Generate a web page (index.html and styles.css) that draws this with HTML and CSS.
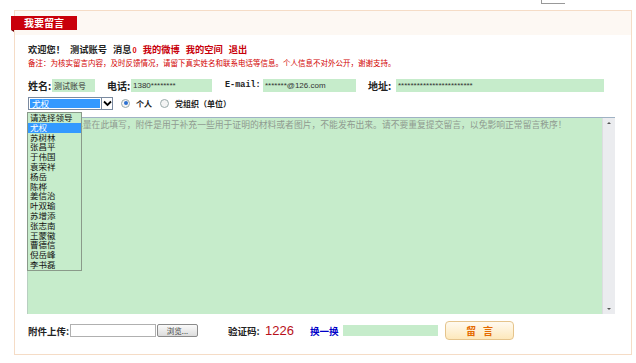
FILE: index.html
```html
<!DOCTYPE html>
<html lang="zh-CN">
<head>
    <meta charset="UTF-8">
    <title>我要留言</title>
    <link rel="stylesheet" href="styles.css">
</head>
<body>
<div class="corner"></div>
<div class="panel">
    <div class="panel_head">
        <span class="tab">我要留言</span>
    </div>
    <div class="panel_body">
        <div class="welcome">
            <span>欢迎您！</span>
            <span class="user">测试账号</span>
            <span class="msg">消息<em>0</em></span>
            <a class="link">我的微博</a>
            <a class="link">我的空间</a>
            <a class="link">退出</a>
        </div>
        <div class="note">备注：为核实留言内容，及时反馈情况，请留下真实姓名和联系电话等信息。个人信息不对外公开，谢谢支持。</div>
        <div class="fields">
            <label class="lbl lbl_name">姓名:</label>
            <input class="inp inp_name" type="text" value="测试账号">
            <label class="lbl lbl_tel">电话:</label>
            <input class="inp inp_tel" type="text" value="1380********">
            <label class="lbl lbl_mail">E-mail:</label>
            <input class="inp inp_mail" type="text" value="*******@126.com">
            <label class="lbl lbl_addr">地址:</label>
            <input class="inp inp_addr" type="text" value="************************">
        </div>
        <div class="target">
            <div class="select">
                <span class="select_val">尤权</span>
                <span class="select_btn">
                    <svg width="9" height="7" viewBox="0 0 9 7"><path d="M1 1.5 L4.5 5 L8 1.5" fill="none" stroke="#000" stroke-width="1.8"/></svg>
                </span>
            </div>
            <span class="radio checked"></span>
            <span class="radio_lbl">个人</span>
            <span class="radio"></span>
            <span class="radio_lbl">党组织（单位）</span>
            <ul class="options">
                <li>请选择领导</li>
                <li class="on">尤权</li>
                <li>苏树林</li>
                <li>张昌平</li>
                <li>于伟国</li>
                <li>袁荣祥</li>
                <li>杨岳</li>
                <li>陈桦</li>
                <li>姜信治</li>
                <li>叶双瑜</li>
                <li>苏增添</li>
                <li>张志南</li>
                <li>王蒙徽</li>
                <li>曹德信</li>
                <li>倪岳峰</li>
                <li>李书磊</li>
            </ul>
        </div>
        <div class="content_box">
            <textarea class="content" placeholder="留言内容请尽量在此填写，附件是用于补充一些用于证明的材料或者图片，不能发布出来。请不要重复提交留言，以免影响正常留言秩序！"></textarea>
            <div class="scroll">
                <span class="arrow up"></span>
                <span class="arrow down"></span>
            </div>
        </div>
        <div class="bottom">
            <label class="lbl lbl_file">附件上传:</label>
            <span class="file_box"></span>
            <span class="browse">浏览...</span>
            <label class="lbl lbl_code">验证码:</label>
            <span class="code">1226</span>
            <a class="change">换一换</a>
            <input class="inp inp_code" type="text">
            <span class="submit">留&nbsp;&nbsp;&nbsp;言</span>
        </div>
    </div>
</div>
</body>
</html>
```
FILE: styles.css
```css
html, body {
    margin: 0px;
    background-color: #fff;
    font-family: "Noto Sans CJK SC", "Liberation Sans", sans-serif;
    color: #222;
}

.corner {
    margin-left: 541px;
    width: 23px;
    height: 3px;
    border-left: 1px solid #999;
    border-bottom: 1px solid #999;
}

.panel {
    margin: 6px 0 0 14px;
    width: 616px;
    height: 343px;
    border: 1px solid #f5dcc6;
}

.panel_head {
    height: 24px;
    background-color: #fdf8f3;
    display: flex;
    align-items: flex-start;
}

.tab {
    position: relative;
    margin: 5px 0 0 -4px;
    width: 66px;
    height: 14px;
    line-height: 14px;
    background-color: #c9000b;
    color: #fff;
    font-size: 10px;
    font-weight: bold;
    text-align: center;
}

.tab:after {
    content: '';
    position: absolute;
    left: 0;
    top: 14px;
    border-top: 2px solid #7a0006;
    border-left: 3px solid transparent;
}

.panel_body {
    padding-left: 13px;
}

.welcome {
    margin-top: 7px;
    height: 14px;
    line-height: 14px;
    font-size: 9.25px;
    font-weight: bold;
    color: #222;
    display: flex;
}

.welcome .user {
    margin-left: 5px;
}

.welcome .msg {
    margin-left: 6px;
}

.welcome .msg em {
    font-style: normal;
    color: #d00;
    font-size: 7px;
    margin-left: 1px;
}

.welcome .link {
    color: #c8000a;
    margin-left: 6px;
}

.note {
    height: 14px;
    line-height: 14px;
    font-size: 7.5px;
    color: #d20000;
    white-space: nowrap;
}

.fields {
    margin-top: 8px;
    height: 14px;
    display: flex;
    align-items: center;
}

.lbl {
    font-size: 10px;
    font-weight: bold;
    color: #222;
    white-space: nowrap;
}

.lbl_name { width: 24px; }
.lbl_tel { width: 24px; margin-left: 12px; }
.lbl_mail {
    width: 38px;
    margin-left: 13px;
    font-family: "Liberation Mono", monospace;
    font-size: 8.5px;
}
.lbl_addr { width: 28px; margin-left: 12px; }

.inp {
    box-sizing: border-box;
    height: 13px;
    padding: 0 2px;
    border: 0;
    background-color: #c6eccb;
    font-family: "Liberation Sans", "Noto Sans CJK SC", sans-serif;
    font-size: 8px;
    color: #333;
    outline: none;
}

.inp_name { width: 43px; font-family: "Noto Sans CJK SC", sans-serif; }
.inp_tel { width: 81px; }
.inp_mail { width: 93px; }
.inp_addr { width: 208px; }

.target {
    position: relative;
    margin-top: 4px;
    height: 14px;
    display: flex;
    align-items: center;
}

.select {
    box-sizing: border-box;
    width: 85px;
    height: 13px;
    border: 1px solid #7a8aa0;
    display: flex;
    background-color: #fff;
}

.select_val {
    flex: 1;
    margin: 1px;
    background-color: #3399ff;
    color: #fff;
    font-size: 8.5px;
    line-height: 9px;
    padding-left: 2px;
}

.select_btn {
    width: 10px;
    border-left: 1px solid #7a8aa0;
    display: flex;
    align-items: center;
    justify-content: center;
}

.radio {
    box-sizing: border-box;
    width: 9px;
    height: 9px;
    border: 1px solid #9aa;
    border-radius: 50%;
    margin-left: 8px;
    background-color: #f4f4f4;
    display: flex;
    align-items: center;
    justify-content: center;
}

.radio.checked:after {
    content: '';
    width: 4px;
    height: 4px;
    border-radius: 50%;
    background-color: #2a6fd0;
}

.radio_lbl {
    margin-left: 6px;
    font-size: 8px;
    font-weight: bold;
    color: #222;
}

.options {
    position: absolute;
    left: -1px;
    top: 16px;
    z-index: 2;
    margin: 0;
    padding: 0;
    list-style: none;
    width: 55px;
    box-sizing: border-box;
    border: 1px solid #8a9a8a;
    background-color: #c6eccb;
}

.options li {
    height: 9.8px;
    line-height: 9.8px;
    font-size: 8.5px;
    padding-left: 2px;
    color: #111;
}

.options li.on {
    background-color: #3399ff;
    color: #fff;
}

.content_box {
    margin: 7px 0 0 -1px;
    width: 588px;
    height: 197px;
    box-sizing: border-box;
    border-top: 1px solid #9fb2c4;
    border-left: 1px solid #b8cfc0;
    background-color: #c6eccb;
    display: flex;
}

.content {
    flex: 1;
    border: 0;
    margin: 0;
    padding: 1px 2px;
    resize: none;
    background-color: transparent;
    font-family: "Noto Sans CJK SC", sans-serif;
    font-size: 8.8px;
    line-height: 12px;
    outline: none;
}

.content::placeholder {
    color: #8f9a90;
}

.scroll {
    width: 12px;
    background-color: #ebecef;
    border-left: 1px solid #dcdde0;
    display: flex;
    flex-direction: column;
    justify-content: space-between;
    align-items: center;
    padding: 4px 0;
}

.arrow {
    width: 0;
    height: 0;
    border-left: 2px solid transparent;
    border-right: 2px solid transparent;
}

.arrow.up { border-bottom: 2px solid #555; }
.arrow.down { border-top: 2px solid #555; }

.bottom {
    margin-top: 7px;
    height: 19px;
    display: flex;
    align-items: center;
}

.lbl_file { width: 42px; font-size: 9.5px; }

.file_box {
    box-sizing: border-box;
    width: 86px;
    height: 13px;
    border: 1px solid #b0b0b0;
    background-color: #fff;
}

.browse {
    box-sizing: border-box;
    width: 41px;
    height: 13px;
    margin-left: 1px;
    border: 1px solid #8a8a8a;
    border-radius: 2px;
    background: linear-gradient(#fafafa, #dcdcdc);
    font-size: 7.5px;
    line-height: 11px;
    text-align: center;
    color: #444;
}

.lbl_code { margin-left: 30px; width: 37px; font-size: 9.5px; }

.code {
    width: 45px;
    font-family: "Liberation Sans", sans-serif;
    font-size: 13px;
    color: #b8101a;
}

.change {
    width: 33px;
    font-size: 9.5px;
    font-weight: bold;
    color: #0000c8;
}

.inp_code { width: 95px; height: 11px; }

.submit {
    box-sizing: border-box;
    margin-left: 7px;
    width: 69px;
    height: 19px;
    border: 1px solid #e5c48c;
    border-radius: 4px;
    background: linear-gradient(#fffaf0, #fde8bb);
    color: #e46a00;
    font-size: 10px;
    font-weight: bold;
    line-height: 17px;
    text-align: center;
}
```
